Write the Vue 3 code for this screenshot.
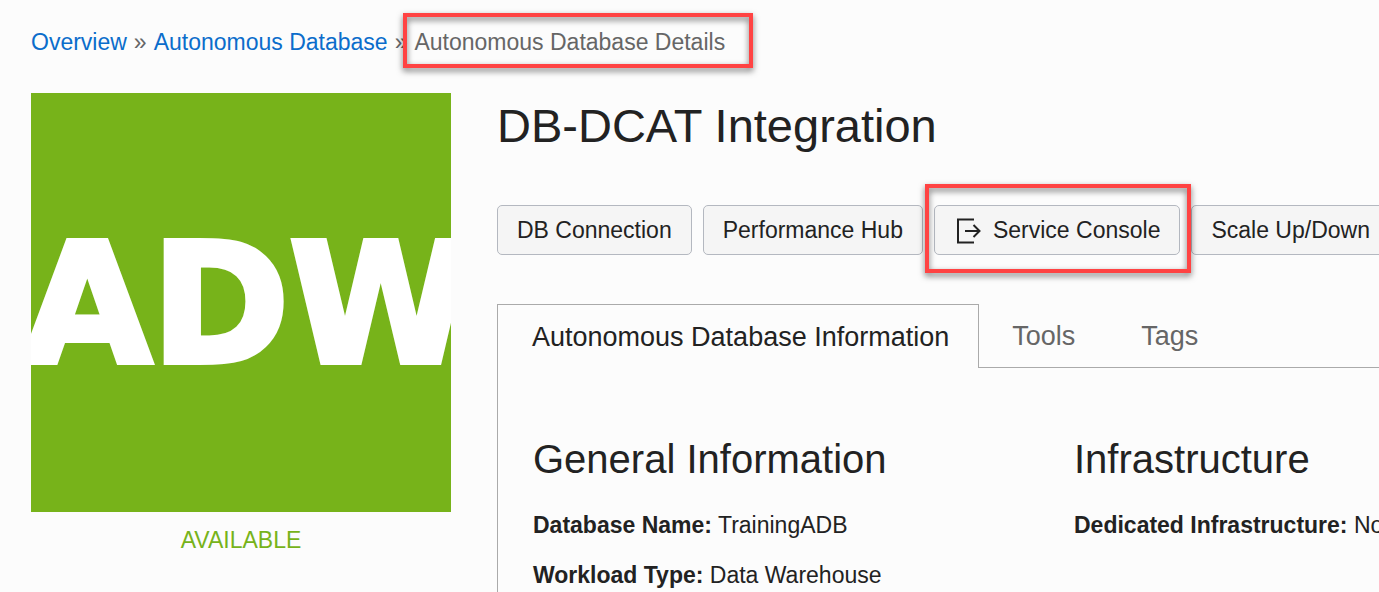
<script setup>
const actions = ['DB Connection', 'Performance Hub', 'Service Console', 'Scale Up/Down']
const tabs = ['Autonomous Database Information', 'Tools', 'Tags']
const sections = [
  {
    title: 'General Information',
    rows: [
      { label: 'Database Name:', value: 'TrainingADB' },
      { label: 'Workload Type:', value: 'Data Warehouse' },
    ],
  },
  {
    title: 'Infrastructure',
    rows: [{ label: 'Dedicated Infrastructure:', value: 'No' }],
  },
]
</script>

<template>
  <div class="page">
    <nav class="crumbs" aria-label="Breadcrumb">
      <a href="#">Overview</a>
      <span>»</span>
      <a href="#">Autonomous Database</a>
      <span>»</span>
      <span class="current" aria-current="page">Autonomous Database Details</span>
    </nav>
    <div class="layout">
      <aside class="side">
        <svg class="tile" viewBox="0 0 420 419" role="img" aria-label="ADW">
          <text x="-8" y="269">ADW</text>
        </svg>
        <p class="status">AVAILABLE</p>
      </aside>
      <main class="main">
        <h1>DB-DCAT Integration</h1>
        <div class="actions">
          <button
            v-for="action in actions"
            :key="action"
            type="button"
            :class="{ marked: action === 'Service Console' }"
          >
            <svg v-if="action === 'Service Console'" class="exit" viewBox="0 0 24 26" aria-hidden="true">
              <path d="M17 1.5H1V24.5H17M8 13H22.5M16.5 7L22.5 13L16.5 19" />
            </svg>
            <span>{{ action }}</span>
          </button>
        </div>
        <div class="tabs" role="tablist">
          <button
            v-for="(tab, i) in tabs"
            :key="tab"
            type="button"
            role="tab"
            :aria-selected="i === 0"
            :class="{ active: i === 0 }"
          >{{ tab }}</button>
        </div>
        <div class="panel" role="tabpanel">
          <section v-for="section in sections" :key="section.title">
            <h2>{{ section.title }}</h2>
            <p v-for="row in section.rows" :key="row.label"><b>{{ row.label }}</b> {{ row.value }}</p>
          </section>
        </div>
      </main>
    </div>
  </div>
</template>

<style>
body { background: #fcfcfc; }
</style>
<style scoped>
.page {
  box-sizing: border-box;
  min-height: 100vh;
  display: flex;
  flex-direction: column;
  padding: 24px 0 0 31px;
  overflow: hidden;
  font: 23px/32px "Liberation Sans", Arial, sans-serif;
  color: #222;
  white-space: nowrap;
}
h1, h2, p { margin: 0; font-weight: 400; }
button { font: inherit; color: inherit; margin: 0; cursor: pointer; }

.crumbs { display: flex; gap: 7px; line-height: 36px; color: #666; }
.crumbs a { color: #0b6dcb; text-decoration: none; }
.current, .marked { position: relative; }
.current::after, .marked::after {
  content: "";
  position: absolute;
  border: 4px solid #ff4343;
  filter: drop-shadow(0 3px 3px rgba(0, 0, 0, 0.55));
  pointer-events: none;
}
.current::after { inset: -11px -28px -8px -11px; }

.layout { flex: 1; display: flex; gap: 46px; margin-top: 33px; }
.side { flex: none; width: 420px; text-align: center; }
.tile { display: block; width: 100%; background: #77b31a; overflow: hidden; }
.tile text {
  font: bold 166px "DejaVu Sans", sans-serif;
  fill: #fff;
  stroke: #fff;
  stroke-width: 6px;
}
.status { margin-top: 12px; color: #77b31a; }

.main { flex: 1; min-width: 0; display: flex; flex-direction: column; }
h1 { font-size: 47px; line-height: 66px; }
.actions { display: flex; gap: 11px; margin-top: 46px; }
.actions button {
  flex: none;
  display: flex;
  align-items: center;
  height: 50px;
  padding: 0 19px;
  border: 1px solid #b4b8c0;
  border-radius: 5px;
  background: #f5f5f5;
}
.exit {
  width: 24px;
  height: 26px;
  margin: 2px 12px 0 3px;
  fill: none;
  stroke: #222;
  stroke-width: 2;
}
.actions .marked { z-index: 1; }
.marked::after { inset: -22px -12px -19px -10px; }

.tabs { display: flex; margin-top: 49px; }
.tabs button {
  height: 64px;
  padding: 0 33px;
  border: 0;
  border-bottom: 1px solid #aaa;
  background: none;
  font-size: 27px;
  color: #666;
}
.tabs .active {
  padding: 0 29px 0 34px;
  border: 1px solid #aaa;
  border-bottom: 0;
  color: #222;
}
.tabs::after { content: ""; flex: 1; border-bottom: 1px solid #aaa; }

.panel {
  flex: 1;
  display: grid;
  grid-template-columns: 541px 1fr;
  padding: 63px 0 0 35px;
  border-left: 1px solid #aaa;
}
h2 { font-size: 40px; line-height: 56px; margin-bottom: 22px; }
section p + p { margin-top: 18px; }
</style>
